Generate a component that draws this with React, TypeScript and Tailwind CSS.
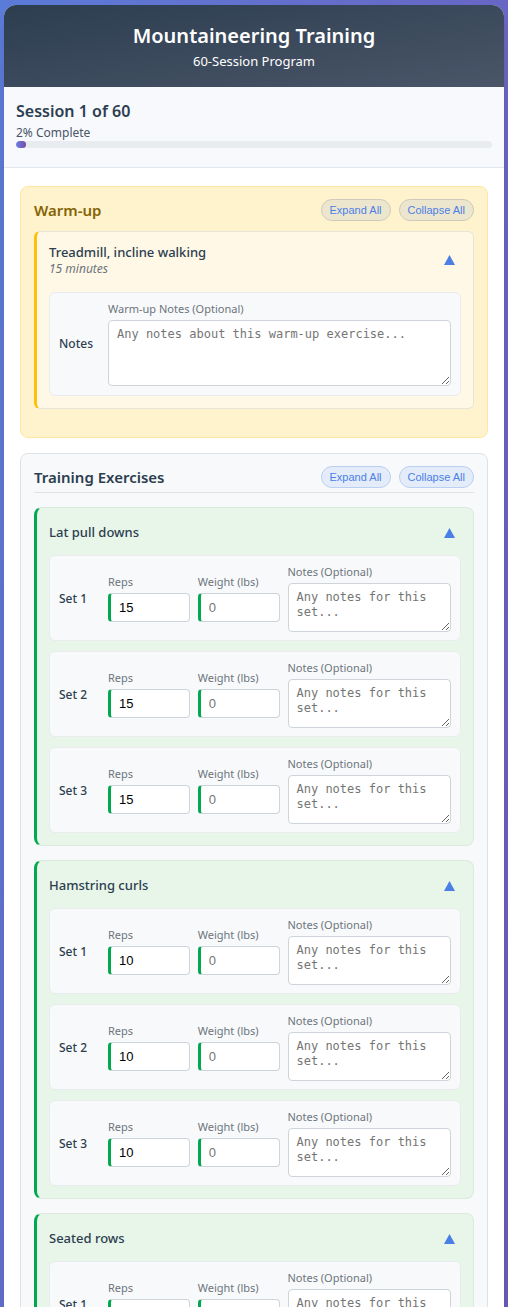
import React, { useState } from 'react';

interface Exercise {
  name: string;
  reps: number;
  sets: number;
}

const exercises: Exercise[] = [
  { name: 'Lat pull downs', reps: 15, sets: 3 },
  { name: 'Hamstring curls', reps: 10, sets: 3 },
  { name: 'Seated rows', reps: 12, sets: 3 },
  { name: 'Leg press', reps: 12, sets: 3 },
  { name: 'Step-ups', reps: 10, sets: 3 },
];

function Caret() {
  return (
    <button className="px-1.5 py-1">
      <svg width="11" height="10" viewBox="0 0 11 10">
        <polygon points="5.5,0 11,10 0,10" fill="#4a7fe6" />
      </svg>
    </button>
  );
}

function PillButtons({ warm }: { warm?: boolean }) {
  const cls = warm
    ? 'bg-[#ede6cf] border-[#cfcabb]'
    : 'bg-[#e4ecfa] border-[#bccff3]';
  return (
    <div className="flex gap-2 font-['Liberation_Sans',Arial,sans-serif] text-[11px] text-[#4a7fe6]">
      <button className={`h-[22px] px-2 rounded-full border ${cls}`}>Expand All</button>
      <button className={`h-[22px] px-2 rounded-full border ${cls}`}>Collapse All</button>
    </div>
  );
}

function SetRow({ index, reps }: { index: number; reps: number }) {
  const [value, setValue] = useState(String(reps));
  return (
    <div className="grid grid-cols-[41px_1fr_1fr_2fr] gap-2 items-center bg-[#f8f9fa] border border-[#e9ecef] rounded-md px-[9px] pt-[9px] pb-[8px]">
      <div className="text-xs font-medium text-[#2c3e50]">Set {index}</div>
      <div>
        <div className="text-[11px] leading-[14px] text-[#6c757d] mb-1">Reps</div>
        <input
          value={value}
          onChange={(e) => setValue(e.target.value)}
          className="w-full h-[29px] bg-white border border-[#ced4da] border-l-[3px] border-l-[#00a84f] rounded px-2 text-[13px] text-black font-['Liberation_Sans',Arial,sans-serif] outline-none"
        />
      </div>
      <div>
        <div className="text-[11px] leading-[14px] text-[#6c757d] mb-1 whitespace-nowrap">Weight (lbs)</div>
        <input
          placeholder="0"
          className="w-full h-[29px] bg-white border border-[#ced4da] border-l-[3px] border-l-[#00a84f] rounded px-2 text-[13px] text-black placeholder:text-[#757575] font-['Liberation_Sans',Arial,sans-serif] outline-none"
        />
      </div>
      <div>
        <div className="text-[11px] leading-[14px] text-[#6c757d] mb-1">Notes (Optional)</div>
        <textarea
          placeholder="Any notes for this set..."
          className="block w-full h-[49px] bg-white border border-[#ced4da] rounded px-2 py-1.5 text-xs leading-[15px] font-['DejaVu_Sans_Mono',monospace] placeholder:text-[#757575] outline-none"
        />
      </div>
    </div>
  );
}

function ExerciseCard({ exercise }: { exercise: Exercise }) {
  return (
    <div className="bg-[#e8f5e9] border border-[#dce9de] border-l-[3px] border-l-[#00a84f] rounded-lg p-3">
      <div className="flex items-center justify-between h-[26px] mb-[9px]">
        <div className="text-[13px] font-medium text-[#2c3e50]">{exercise.name}</div>
        <Caret />
      </div>
      <div className="flex flex-col gap-2.5">
        {Array.from({ length: exercise.sets }).map((_, i) => (
          <SetRow key={i} index={i + 1} reps={exercise.reps} />
        ))}
      </div>
    </div>
  );
}

export default function App() {
  return (
    <div className="min-h-screen bg-linear-to-br from-[#5b7bd8] to-[#7050b0] px-1 pt-[5px] pb-6 font-['Noto_Sans',sans-serif]">
      <div className="bg-white rounded-xl overflow-hidden shadow-xl">
        {/* Header */}
        <header className="bg-linear-to-br from-[#2c3e50] to-[#4a5568] text-white text-center h-[82px] flex flex-col justify-center">
          <h1 className="text-[20px] leading-7 font-semibold">Mountaineering Training</h1>
          <p className="text-[13px] leading-[18px] mt-0.5">60-Session Program</p>
        </header>

        {/* Progress */}
        <div className="bg-[#f7f9fc] border-b border-[#e2e8f0] px-3 pt-3 pb-[19px]">
          <h2 className="text-[16px] leading-6 font-semibold text-[#2c3e50]">Session 1 of 60</h2>
          <div className="text-xs leading-4 text-[#4a5568] mt-[2px]">2% Complete</div>
          <div className="h-[7px] bg-[#e9ecef] rounded-full overflow-hidden">
            <div className="h-full bg-linear-to-r from-[#667eea] to-[#764ba2] rounded-full" style={{ width: '2%' }} />
          </div>
        </div>

        <main className="px-4 pt-[18px] pb-6 flex flex-col gap-[15px]">
          {/* Warm-up */}
          <section className="bg-[#fff3cd] border border-[#ffe69c] rounded-lg px-[13px] pt-3 pb-[28px]">
            <div className="flex items-center justify-between mb-[9px]">
              <h3 className="text-[15px] font-semibold text-[#856404]">Warm-up</h3>
              <PillButtons warm />
            </div>
            <div className="bg-[#fff8e6] border border-[#e6e4dc] border-l-[3px] border-l-[#ffc107] rounded-md px-3 pt-[11px] pb-3">
              <div className="flex items-center justify-between">
                <div>
                  <div className="text-[13px] leading-[18px] font-medium text-[#2c3e50]">Treadmill, incline walking</div>
                  <div className="text-xs leading-4 italic text-[#6c757d]">15 minutes</div>
                </div>
                <Caret />
              </div>
              <div className="mt-[15px] grid grid-cols-[41px_1fr] gap-2 items-center bg-[#f8f9fa] border border-[#e9ecef] rounded-md p-[9px]">
                <div className="text-xs font-medium text-[#2c3e50]">Notes</div>
                <div>
                  <div className="text-[11px] leading-[14px] text-[#6c757d] mb-1">Warm-up Notes (Optional)</div>
                  <textarea
                    placeholder="Any notes about this warm-up exercise..."
                    className="block w-full h-[66px] bg-white border border-[#ced4da] rounded px-2 py-1.5 text-xs leading-[15px] font-['DejaVu_Sans_Mono',monospace] placeholder:text-[#757575] outline-none"
                  />
                </div>
              </div>
            </div>
          </section>

          {/* Training */}
          <section className="bg-[#f8f9fa] border border-[#dee2e6] rounded-lg p-[13px] pt-3">
            <div className="flex items-center justify-between pb-1 border-b border-[#dee2e6] mb-[14px]">
              <h3 className="text-[15px] font-semibold text-[#2c3e50]">Training Exercises</h3>
              <PillButtons />
            </div>
            <div className="flex flex-col gap-[14px]">
              {exercises.map((ex) => (
                <ExerciseCard key={ex.name} exercise={ex} />
              ))}
            </div>
          </section>
        </main>
      </div>
    </div>
  );
}
